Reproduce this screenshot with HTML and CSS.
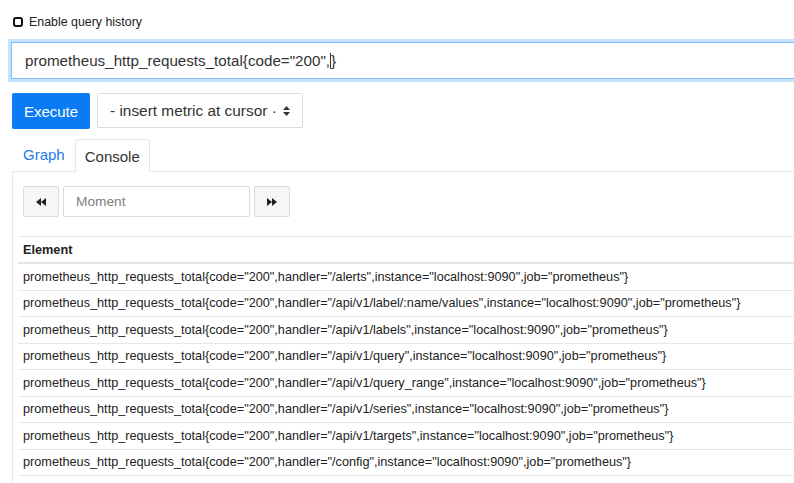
FILE: index.html
```html
<!DOCTYPE html>
<html>
<head>
<meta charset="utf-8">
<link rel="stylesheet" href="styles.css">
</head>
<body>
<div class="page">
  <label class="history">
    <span class="check"></span>
    <span>Enable query history</span>
  </label>
  <div class="query">prometheus_http_requests_total{code="200",<span class="caret"></span>}</div>
  <div class="actions">
    <button class="execute">Execute</button>
    <div class="select">
      <span>- insert metric at cursor ·</span>
      <svg class="updown" width="7" height="10" viewBox="0 0 7 10"><path d="M3.5 0 L7 4 H0 Z M3.5 10 L0 6 H7 Z" fill="#333"/></svg>
    </div>
  </div>
  <div class="tabs">
    <a class="tab link">Graph</a>
    <a class="tab active">Console</a>
  </div>
  <div class="pane">
    <div class="moment-row">
      <button class="nav-btn"><svg width="10" height="8" viewBox="0 0 10 8"><path d="M5 0 V8 L0 4 Z M10 0 V8 L5 4 Z" fill="#222"/></svg></button>
      <div class="moment">Moment</div>
      <button class="nav-btn"><svg width="10" height="8" viewBox="0 0 10 8"><path d="M0 0 V8 L5 4 Z M5 0 V8 L10 4 Z" fill="#222"/></svg></button>
    </div>
    <table class="results">
      <thead><tr><th>Element</th></tr></thead>
      <tbody>
        <tr><td>prometheus_http_requests_total{code="200",handler="/alerts",instance="localhost:9090",job="prometheus"}</td></tr>
        <tr><td>prometheus_http_requests_total{code="200",handler="/api/v1/label/:name/values",instance="localhost:9090",job="prometheus"}</td></tr>
        <tr><td>prometheus_http_requests_total{code="200",handler="/api/v1/labels",instance="localhost:9090",job="prometheus"}</td></tr>
        <tr><td>prometheus_http_requests_total{code="200",handler="/api/v1/query",instance="localhost:9090",job="prometheus"}</td></tr>
        <tr><td>prometheus_http_requests_total{code="200",handler="/api/v1/query_range",instance="localhost:9090",job="prometheus"}</td></tr>
        <tr><td>prometheus_http_requests_total{code="200",handler="/api/v1/series",instance="localhost:9090",job="prometheus"}</td></tr>
        <tr><td>prometheus_http_requests_total{code="200",handler="/api/v1/targets",instance="localhost:9090",job="prometheus"}</td></tr>
        <tr><td>prometheus_http_requests_total{code="200",handler="/config",instance="localhost:9090",job="prometheus"}</td></tr>
        <tr><td>prometheus_http_requests_total{code="200",handler="/flags",instance="localhost:9090",job="prometheus"}</td></tr>
      </tbody>
    </table>
  </div>
</div>
</body>
</html>
```
FILE: styles.css
```css
html, body {
  margin: 0;
  padding: 0;
  background: #fff;
  overflow: hidden;
}
body {
  width: 794px;
  height: 483px;
  font-family: "Liberation Sans", Arial, sans-serif;
  color: #333;
}
.page {
  width: 900px;
  padding: 15px 0 0 12px;
}
.history {
  display: flex;
  align-items: center;
  gap: 6px;
  height: 14px;
  font-size: 12.4px;
  color: #222;
}
.check {
  width: 6px;
  height: 6px;
  border: 2px solid #111;
  border-radius: 3px;
  margin-left: 1px;
}
.query {
  margin-top: 13px;
  margin-left: -1px;
  height: 35px;
  line-height: 35px;
  border: 1px solid #80bdff;
  box-shadow: 0 0 0 3px rgba(0, 123, 255, 0.22);
  padding-left: 13px;
  font-size: 15.2px;
  color: #333;
}
.caret {
  display: inline-block;
  width: 1px;
  height: 16px;
  background: #333;
  vertical-align: -3px;
}
.actions {
  display: flex;
  gap: 7px;
  margin-top: 14px;
}
.execute {
  width: 78px;
  height: 36px;
  background: #0a7bf5;
  color: #fff;
  border: 0;
  border-radius: 2px;
  font-family: inherit;
  font-size: 15px;
  padding: 0;
}
.select {
  width: 180px;
  height: 33px;
  border: 1px solid #d9dcdf;
  border-radius: 2px;
  display: flex;
  align-items: center;
  justify-content: space-between;
  padding: 0 12px 0 12px;
  box-sizing: content-box;
  font-size: 15.4px;
  color: #333;
}
.tabs {
  display: flex;
  margin-top: 9px;
  height: 33px;
  align-items: stretch;
}
.tab {
  display: flex;
  align-items: center;
  font-size: 15px;
  padding: 0 10px;
}
.tab.link {
  color: #1f7ae8;
  padding-left: 11px;
}
.tab.active {
  border: 1px solid #e3e5e8;
  border-bottom: 0;
  border-radius: 3px 3px 0 0;
  padding: 0 9px;
  color: #333;
  position: relative;
  top: 1px;
  background: #fff;
}
.pane {
  border-top: 1px solid #e8e8e8;
  border-left: 1px solid #e8e8e8;
  padding: 14px 0 0 5px;
}
.moment-row {
  display: flex;
  gap: 4px;
  margin-left: 5px;
  height: 31px;
}
.nav-btn {
  width: 36px;
  height: 31px;
  border: 1px solid #dcdcdc;
  background: #f6f6f7;
  border-radius: 2px;
  padding: 0;
  display: flex;
  align-items: center;
  justify-content: center;
}
.moment {
  width: 173px;
  height: 29px;
  border: 1px solid #d9dcdf;
  border-radius: 2px;
  padding-left: 12px;
  line-height: 29px;
  font-size: 13.7px;
  color: #808080;
}
.results {
  border-collapse: collapse;
  margin-top: 19px;
  width: 880px;
  font-size: 12.7px;
  color: #222;
}
.results th {
  text-align: left;
  font-weight: bold;
  height: 25px;
  padding: 0 5px;
  border-top: 1px solid #e6e6e6;
  border-bottom: 2px solid #e2e4e7;
}
.results td {
  height: 25.5px;
  padding: 0 5px;
  border-top: 1px solid #e8e8e8;
  white-space: nowrap;
}
```
